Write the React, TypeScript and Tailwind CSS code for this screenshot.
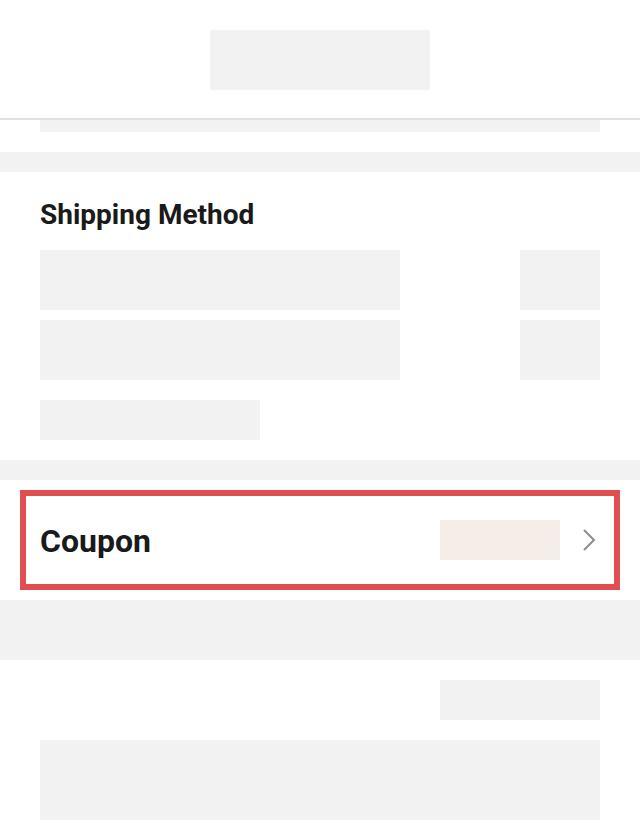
import React from 'react';

const Block = ({ className }: { className: string }) => <div className={`bg-[#f2f2f2] ${className}`} />;

const Band = ({ className }: { className: string }) => <div className={`w-full bg-[#f2f2f2] ${className}`} />;

const ChevronRight = () => (
  <svg className="w-5 h-6 shrink-0" viewBox="0 0 20 24" fill="none" stroke="#8c8c8c" strokeWidth={2}>
    <path d="M4 2 L14 12 L4 22" />
  </svg>
);

export default function App() {
  return (
    <div className="w-[640px] h-[840px] overflow-hidden bg-white text-[#1a1a1a] font-['Roboto',sans-serif]">
      {/* Header */}
      <div className="pt-[30px] pb-[28px] flex justify-center border-b-2 border-[#e0e0e0]">
        <Block className="w-[220px] h-[60px]" />
      </div>

      <div className="px-10 pb-5">
        <Block className="h-3" />
      </div>

      <Band className="h-5" />

      {/* Shipping method */}
      <section className="px-10 pt-[27px] pb-5">
        <h2 className="text-[28px] leading-8 font-bold mb-[19px]">Shipping Method</h2>
        <div className="flex flex-col gap-[10px]">
          <div className="flex justify-between">
            <Block className="w-[360px] h-[60px]" />
            <Block className="w-20 h-[60px]" />
          </div>
          <div className="flex justify-between">
            <Block className="w-[360px] h-[60px]" />
            <Block className="w-20 h-[60px]" />
          </div>
        </div>
        <Block className="w-[220px] h-10 mt-5" />
      </section>

      <Band className="h-5" />

      {/* Coupon */}
      <section className="px-5 py-[10px]">
        <div className="h-[100px] border-[6px] border-[#e04e50] px-[14px] flex items-center">
          <span className="text-[32px] leading-9 font-bold flex-1 pt-[2px]">Coupon</span>
          <Block className="w-[120px] h-10 !bg-[#f5ede8]" />
          <div className="ml-5">
            <ChevronRight />
          </div>
        </div>
      </section>

      <Band className="h-[60px]" />

      {/* Summary */}
      <section className="px-10 pt-5 pb-5 flex flex-col gap-5">
        <div className="flex justify-end">
          <Block className="w-40 h-10" />
        </div>
        <Block className="h-20" />
      </section>
    </div>
  );
}
